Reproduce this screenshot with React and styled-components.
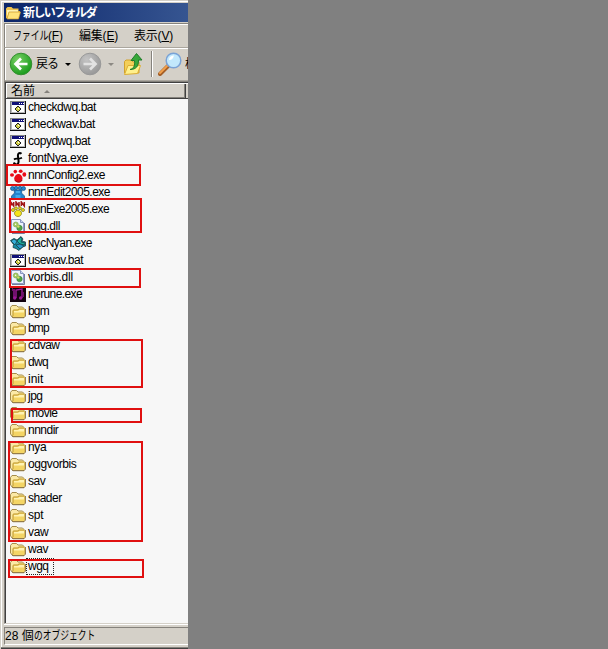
import React from "react";
import styled, { createGlobalStyle } from "styled-components";

const GlobalStyle = createGlobalStyle`
  *, *::before, *::after { box-sizing: border-box; }
  body {
    margin: 0;
    background: #808080;
    overflow: hidden;
    font-family: "Liberation Sans", "Noto Sans CJK JP", sans-serif;
    font-size: 12px;
    color: #000;
  }
  svg { display: block; flex: none; }
`;

const Window = styled.div`
  width: 188px;
  height: 649px;
  overflow: hidden;
  background: #d4d0c8;
  border-top: 1px solid #d4d0c8;
  border-left: 1px solid #d4d0c8;
  box-shadow: inset 1px 1px 0 #fff;
  padding: 2px 0 0 3px;
  display: flex;
  flex-direction: column;
`;

const TitleBar = styled.div`
  height: 19px;
  flex: none;
  display: flex;
  align-items: center;
  gap: 2px;
  padding-left: 1px;
  background: linear-gradient(90deg, #0b2569, #365591);
  color: #fff;
  font-weight: 700;
  line-height: 18px;
  letter-spacing: ${(p) => p.$tracking}px;
  white-space: nowrap;
`;

const MenuBar = styled.div`
  height: 24px;
  flex: none;
  margin-top: 1px;
  border-top: 1px solid #85827c;
  border-left: 1px solid #85827c;
  box-shadow: inset 1px 1px 0 #fff;
  display: flex;
  align-items: center;
  padding-left: 8px;
`;

const MenuItem = styled.span`
  width: ${(p) => p.$width}px;
  flex: none;
  display: flex;
  line-height: 20px;
  letter-spacing: -0.2px;
  white-space: nowrap;
`;

const Kana = styled.span`
  display: inline-block;
  width: ${(p) => p.$width}px;
  transform: scaleX(${(p) => p.$scale});
  transform-origin: left;
  white-space: nowrap;
`;

const Toolbar = styled.div`
  height: 34px;
  flex: none;
  border-left: 1px solid #85827c;
  border-top: 1px solid #aaa69e;
  border-bottom: 1px solid #aaa69e;
  box-shadow: inset 1px 1px 0 #fff;
  display: flex;
  align-items: center;
  padding-left: 4px;
  overflow: hidden;
`;

const ToolLabel = styled.span`
  width: ${(p) => p.$width}px;
  flex: none;
  margin-left: ${(p) => p.$left}px;
  line-height: 18px;
  letter-spacing: -1px;
  white-space: nowrap;
`;

const Arrow = styled.span`
  flex: none;
  width: 0;
  border: 3px solid transparent;
  border-top-color: ${(p) => p.$color};
  border-bottom: 0;
  margin: 0 ${(p) => p.$right}px 0 ${(p) => p.$left}px;
`;

const Separator = styled.span`
  flex: none;
  width: 2px;
  height: 26px;
  margin: 0 5px 0 8px;
  border-left: 1px solid #85827c;
  border-right: 1px solid #fff;
`;

const ListPane = styled.div`
  position: relative;
  flex: 1;
  min-height: 0;
  border-top: 1px solid #85827c;
  border-left: 1px solid #85827c;
  border-bottom: 1px solid #d4d0c8;
  box-shadow: inset 1px 1px 0 #404040, 0 1px 0 #fff;
  background: #f7f7f7;
  padding: 1px 0 0 1px;
`;

const HeaderRow = styled.div`
  height: 16px;
  display: flex;
  background: #d4d0c8;
  border-top: 1px solid #fff;
  border-bottom: 1px solid #404040;
`;

const HeaderCell = styled.div`
  width: 180px;
  flex: none;
  display: flex;
  align-items: center;
  gap: 9px;
  padding-left: 4px;
  line-height: 14px;
  border-left: 1px solid #fff;
  border-right: 1px solid #404040;
  box-shadow: inset -1px -1px 0 #85827c;
`;

const SortMark = styled.span`
  width: 0;
  border: 3px solid transparent;
  border-bottom-color: #85827c;
  border-top: 0;
`;

const FileList = styled.div`
  padding-left: 4px;
`;

const FileRow = styled.div`
  height: 17px;
  display: flex;
  align-items: flex-start;
`;

const FileName = styled.span`
  height: 17px;
  line-height: 16px;
  padding: 0 5px 0 2px;
  letter-spacing: ${(p) => p.$tracking}px;
  white-space: nowrap;
  outline: ${(p) => (p.$focused ? "1px dotted #222" : "none")};
  outline-offset: -1px;
`;

const Highlight = styled.div`
  position: absolute;
  left: ${(p) => p.$x - 5}px;
  top: ${(p) => p.$y - 82}px;
  width: ${(p) => p.$w}px;
  height: ${(p) => p.$h}px;
  border: 2px solid #e01010;
`;

const StatusBar = styled.div`
  height: 18px;
  flex: none;
  margin: 3px 0 2px 0;
  border-top: 1px solid #85827c;
  border-left: 1px solid #85827c;
  border-bottom: 1px solid #fff;
  line-height: 16px;
  white-space: pre;
`;

const BottomEdge = styled.div`
  height: 2px;
  flex: none;
  margin-left: -4px;
  border-top: 1px solid #85827c;
  background: #404040;
`;

const FolderIcon = () => (
  <svg width="16" height="16" viewBox="0 0 16 16">
    <path d="M2 13.500.5 12V4.500L2 2.500h4.500L8 4h4.500L14 5.500V12z" fill="#fbe9a6" stroke="#a58d4c" />
    <path d="M2.500 14V7.500L3.500 6.500h4l1-1H14l1 1V13l-1 1.200H3z" fill="#f4d565" />
    <path d="M3 13V7.500l.8-.5h4l1-1H14" fill="none" stroke="#b18b30" strokeWidth=".8" />
    <path d="M4 9.500V8h4.500l1-1H14v2.500z" fill="#fff3b3" />
    <path d="M1.500 13.500 3 14.700h11l1.300-1.500V6" fill="none" stroke="#7d6228" />
  </svg>
);

const TitleFolder = () => (
  <svg width="16" height="16" viewBox="0 0 16 16">
    <path d="M1 13V3.500L2.500 2h4L8 3.500h5.500V6L15 6l-1.500 7.500H2z" fill="#efc34f" />
    <path d="M2 5h11v2H4l-2 5z" fill="#fff3b0" />
    <path d="M4 7h11.500L13.500 14H2z" fill="#ffe37a" stroke="#c9952a" strokeWidth=".7" />
  </svg>
);

const BatIcon = () => (
  <svg width="16" height="16" viewBox="0 0 16 16" shapeRendering="crispEdges">
    <path d="M0 2h16v13H0z" fill="#848484" />
    <path d="M1 3h14v11H1z" fill="#b8b8b8" />
    <path d="M2 4h12v9H2z" fill="#fff" />
    <path d="M15 2h1v13H0v-1h15z" fill="#111" />
    <path d="M2 3h12v3H2z" fill="#101078" />
    <path d="M9 4h1v1H9zM11 4h1v1h-1zM13 4h1v1h-1z" fill="#fff" />
    <path d="M7 7h2v1h1v1h1v2h-1v1H9v1H7v-1H6v-1H5V9h1V8h1z" fill="#222" />
    <path d="M7 8h2v1h1v2H9v1H7v-1H6V9h1z" fill="#d2cf46" />
    <path d="M8 9h1v1H8z" fill="#fff" />
  </svg>
);

const FontIcon = () => (
  <svg width="16" height="16" viewBox="0 0 16 16" fill="none" stroke="#000">
    <path d="M11.500 3.800C9.500 2 7.500 3.500 8 6.500l.5 4C9 14 7 15.300 4.500 14" strokeWidth="2" />
    <path d="M4 9.500c2-1.800 4 .3 8-1.800" strokeWidth="1.700" />
    <circle cx="4.300" cy="13.500" r="1.200" fill="#000" stroke="none" />
  </svg>
);

const PawIcon = () => (
  <svg width="17" height="16" viewBox="0 0 17 16" fill="#e90b17">
    <ellipse cx="2" cy="8" rx="2" ry="1.800" />
    <ellipse cx="5.300" cy="4.600" rx="1.800" ry="1.800" />
    <ellipse cx="10.700" cy="4.300" rx="1.900" ry="1.800" />
    <ellipse cx="14.300" cy="7.500" rx="1.900" ry="2.200" />
    <path d="M8.500 7c2.200 0 4 2.300 4 4.700s-1.700 3.800-4 3.800-4.300-1.400-4.300-3.800S6.300 7 8.500 7z" />
    <path d="M5 13c1 2.500 6 3 7 0" fill="none" stroke="#941018" />
  </svg>
);

const EditIcon = () => (
  <svg width="16" height="16" viewBox="0 0 16 16" fill="#2385ce" stroke="#164e83" strokeWidth=".7">
    <path d="M4 6h8l-.5 3 3 3v2.500H1.500V12l3-3z" />
    <circle cx="2.500" cy="4.500" r="2" />
    <circle cx="6" cy="4" r="1.800" />
    <circle cx="10" cy="4" r="1.800" />
    <circle cx="13.500" cy="4.500" r="2" />
    <path d="M5.500 14v-3h5v3M6 7h4v2H6z" fill="#42a9e9" stroke="none" />
  </svg>
);

const ExeIcon = () => (
  <svg width="16" height="16" viewBox="0 0 16 16">
    <path d="M.7 5V1l3 4V1M6 5V1l3 4V1M11.300 5V1l3 4V1" fill="none" stroke="#a01515" strokeWidth="1.500" />
    <g fill="#f5e51b" stroke="#79700c" strokeWidth=".7">
      <circle cx="3" cy="9" r="1.500" />
      <circle cx="6" cy="7.200" r="1.400" />
      <circle cx="10" cy="7.200" r="1.400" />
      <circle cx="13" cy="9" r="1.500" />
      <path d="M8 9c2 0 3.500 1.500 3.500 3.300S10 15.500 8 15.500s-3.500-1.400-3.500-3.200S6 9 8 9z" />
    </g>
  </svg>
);

const DllIcon = () => (
  <svg width="16" height="16" viewBox="0 0 16 16">
    <path d="M1.500 1.500h9l3 3v10h-12z" fill="#eef2ff" stroke="#8d9ac4" />
    <path d="M10.500 1.500v3h3" fill="#cbd5ef" stroke="#8795bd" />
    <path d="M14.500 5v10.500H2" fill="none" stroke="#525c83" strokeWidth=".8" />
    <circle cx="5.800" cy="6.500" r="2.500" fill="#a7ca61" stroke="#82aa57" strokeWidth=".7" />
    <circle cx="9.500" cy="10" r="2.700" fill="#54a545" stroke="#388340" strokeWidth=".7" />
    <circle cx="5.600" cy="6.300" r=".7" fill="#fff" />
    <circle cx="8.300" cy="8.500" r="1.300" fill="#d4dc65" />
  </svg>
);

const PacIcon = () => (
  <svg width="16" height="16" viewBox="0 0 16 16" stroke="#164249" strokeWidth=".8">
    <path d="M.5 5.500 4 3.500l3 1.500 4-3.500 2 2.500-1 2 3.500 1v4l-3 1-3.500 3.500-3-2-3-1 .5-3z" fill="#168ca4" />
    <path d="m1 6 3-2 3 2-2 4z" fill="#36aeda" />
    <path d="m7 6 4-4 1 2-1 3 4 1v2l-5-1z" fill="#1bb19c" />
    <path d="m6 10 4-1 4 2-4 3z" fill="#2a96ca" />
  </svg>
);

const MusicIcon = () => (
  <svg width="16" height="16" viewBox="0 0 16 16">
    <path d="M0 0h16v16H0z" fill="#12020f" />
    <path d="M6 12V4l6-1v9M4 3v9" fill="none" stroke="#a41b9f" strokeWidth="1.300" />
    <circle cx="4.700" cy="12" r="1.700" fill="#9c1797" />
    <circle cx="10.700" cy="12" r="1.700" fill="#9c1797" />
    <path d="M2 2h1v3H2zM13 6h1v5h-1z" fill="#691265" />
  </svg>
);

const NavIcon = ({ forward }) => {
  const id = forward ? "navForward" : "navBack";
  return (
    <svg width="24" height="24" viewBox="0 0 24 24">
      <defs>
        <radialGradient id={id} cx=".35" cy=".3" r=".75">
          <stop offset="0" stopColor={forward ? "#c4c4c4" : "#79cf64"} />
          <stop offset="1" stopColor={forward ? "#979797" : "#169a1a"} />
        </radialGradient>
      </defs>
      <circle cx="12" cy="12" r="10.800" fill={`url(#${id})`} stroke={forward ? "#999" : "#358e30"} />
      <path
        d={forward ? "M5.500 12h12M12 6.500l5.500 5.500-5.500 5.500" : "M18.500 12h-12M12 6.500 6.500 12l5.500 5.500"}
        fill="none"
        stroke={forward ? "#e2e2e2" : "#fff"}
        strokeWidth="2.700"
      />
    </svg>
  );
};

const UpIcon = () => (
  <svg width="20" height="24" viewBox="0 0 20 24">
    <path d="M1.500 21V9.500L3 8h5l2 2h6v11z" fill="#f3cf59" stroke="#d2a22c" />
    <path d="M1.500 22.500 5 13.500h12.500l-3 8z" fill="#fff08c" stroke="#dcae35" />
    <path d="M7 17.500c4-1 5-4 4.500-9H8l5.500-7L19 8h-3.500c0 6-2 9.500-8.500 9.500z" fill="#38a83b" stroke="#207c28" />
  </svg>
);

const SearchIcon = () => (
  <svg width="25" height="24" viewBox="0 0 25 24">
    <path d="m2 22 8-8" stroke="#a45e26" strokeWidth="4" strokeLinecap="round" />
    <path d="m2 21 8-8" stroke="#f2a04b" strokeWidth="2" strokeLinecap="round" />
    <circle cx="15.500" cy="8.500" r="7.300" fill="#c2e8fc" stroke="#7aa2d5" strokeWidth="1.500" />
    <path d="M11 8c0-3 2-4.500 5-4.500-1 3-2 4.500-5 4.500z" fill="#fff" />
  </svg>
);

const icons = {
  bat: BatIcon,
  font: FontIcon,
  paw: PawIcon,
  edit: EditIcon,
  exe: ExeIcon,
  dll: DllIcon,
  pac: PacIcon,
  music: MusicIcon,
  folder: FolderIcon,
};

const IconSlot = styled.span`
  width: 16px;
  height: 16px;
  flex: none;
`;

const files = [
  ["checkdwq.bat", "bat", -0.45],
  ["checkwav.bat", "bat", -0.4],
  ["copydwq.bat", "bat", -0.49],
  ["fontNya.exe", "font", -0.35],
  ["nnnConfig2.exe", "paw", -0.52],
  ["nnnEdit2005.exe", "edit", -0.55],
  ["nnnExe2005.exe", "exe", -0.65],
  ["ogg.dll", "dll", -0.5],
  ["pacNyan.exe", "pac", -0.55],
  ["usewav.bat", "bat", -0.47],
  ["vorbis.dll", "dll", -0.25],
  ["nerune.exe", "music", -0.6],
  ["bgm", "folder", -0.8],
  ["bmp", "folder", -0.8],
  ["cdvaw", "folder", -0.5],
  ["dwq", "folder", -0.7],
  ["init", "folder", 0],
  ["jpg", "folder", -0.5],
  ["movie", "folder", -0.5],
  ["nnndir", "folder", -0.5],
  ["nya", "folder", -0.3],
  ["oggvorbis", "folder", -0.4],
  ["sav", "folder", -0.4],
  ["shader", "folder", -0.5],
  ["spt", "folder", -0.2],
  ["vaw", "folder", -0.3],
  ["wav", "folder", -0.4],
  ["wgq", "folder", -0.5],
];

const highlights = [
  [6, 164, 135, 22],
  [9, 198, 133, 35],
  [9, 268, 132, 20],
  [10, 339, 133, 49],
  [11, 408, 131, 15],
  [8, 441, 135, 101],
  [8, 559, 136, 19],
];

export default function App() {
  return (
    <>
      <GlobalStyle />
      <Window>
        <TitleBar $tracking={-1.6}>
          <TitleFolder />
          新しいフォルダ
        </TitleBar>
        <MenuBar>
          <MenuItem $width={66}>
            <Kana $width={35} $scale={0.75}>ファイル</Kana>(<u>F</u>)
          </MenuItem>
          <MenuItem $width={55}>編集(<u>E</u>)</MenuItem>
          <MenuItem $width={50}>表示(<u>V</u>)</MenuItem>
        </MenuBar>
        <Toolbar>
          <NavIcon />
          <ToolLabel $width={24} $left={3}>戻る</ToolLabel>
          <Arrow $color="#000" $left={5} $right={7} />
          <NavIcon forward />
          <Arrow $color="#8c8983" $left={6} $right={9} />
          <UpIcon />
          <Separator />
          <SearchIcon />
          <ToolLabel $width={12} $left={2}>検</ToolLabel>
        </Toolbar>
        <ListPane>
          <HeaderRow>
            <HeaderCell>
              名前
              <SortMark />
            </HeaderCell>
          </HeaderRow>
          <FileList>
            {files.map(([name, kind, tracking]) => {
              const Icon = icons[kind];
              return (
                <FileRow key={name}>
                  <IconSlot><Icon /></IconSlot>
                  <FileName $tracking={tracking} $focused={name === "wgq"}>{name}</FileName>
                </FileRow>
              );
            })}
          </FileList>
          {highlights.map(([x, y, w, h]) => (
            <Highlight key={y} $x={x} $y={y} $w={w} $h={h} />
          ))}
        </ListPane>
        <StatusBar>
          28 個<Kana $width={62} $scale={0.73}>のオブジェクト</Kana>
        </StatusBar>
        <BottomEdge />
      </Window>
    </>
  );
}
